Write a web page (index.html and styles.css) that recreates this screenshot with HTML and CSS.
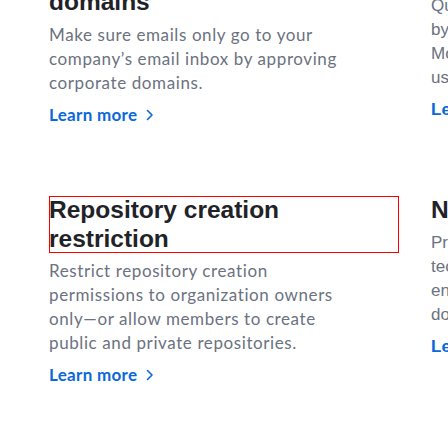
FILE: index.html
```html
<!DOCTYPE html>
<html>
<head>
<meta charset="utf-8">
<link rel="stylesheet" href="styles.css">
</head>
<body>
<div class="page">
  <div class="grid">
    <div class="card">
      <h3 class="title">Restrict email notifications<br>to verified or approved<br>domains</h3>
      <p class="desc">Make sure emails only go to your company’s email inbox by approving corporate domains.</p>
      <a class="more" href="#">Learn more <span class="chev"><svg width="8" height="12" viewBox="0 0 8 12"><path d="M1.5 1.5 L6 6 L1.5 10.5" fill="none" stroke="currentColor" stroke-width="1.6" stroke-linecap="round" stroke-linejoin="round"/></svg></span></a>
    </div>
    <div class="card alt">
      <h3 class="title">Audit log<br>streaming</h3>
      <p class="desc">Quickly review the actions performed<br>by members of your organization.<br>Monitor access, permission changes,<br>user changes, and other events.</p>
      <a class="more" href="#">Learn more <span class="chev"><svg width="8" height="12" viewBox="0 0 8 12"><path d="M1.5 1.5 L6 6 L1.5 10.5" fill="none" stroke="currentColor" stroke-width="1.6" stroke-linecap="round" stroke-linejoin="round"/></svg></span></a>
    </div>
    <div class="card">
      <h3 class="title boxed">Repository creation restriction</h3>
      <p class="desc">Restrict repository creation permissions to organization owners only—or allow members to create public and private repositories.</p>
      <a class="more" href="#">Learn more <span class="chev"><svg width="8" height="12" viewBox="0 0 8 12"><path d="M1.5 1.5 L6 6 L1.5 10.5" fill="none" stroke="currentColor" stroke-width="1.6" stroke-linecap="round" stroke-linejoin="round"/></svg></span></a>
    </div>
    <div class="card alt">
      <h3 class="title">Notification routing</h3>
      <p class="desc">Prevent notifications from leaking to<br>technical or personal accounts by<br>enforcing notification routing to<br>domains you have verified.</p>
      <a class="more" href="#">Learn more <span class="chev"><svg width="8" height="12" viewBox="0 0 8 12"><path d="M1.5 1.5 L6 6 L1.5 10.5" fill="none" stroke="currentColor" stroke-width="1.6" stroke-linecap="round" stroke-linejoin="round"/></svg></span></a>
    </div>
  </div>
</div>
</body>
</html>
```
FILE: styles.css
```css
html, body {
  margin: 0;
  padding: 0;
  background: #ffffff;
  overflow: hidden;
}
.page {
  width: 448px;
  height: 448px;
  overflow: hidden;
}
.grid {
  display: grid;
  grid-template-columns: 350px 350px;
  column-gap: 32px;
  row-gap: 69.5px;
  align-items: start;
  margin-top: -69px;
  margin-left: 49px;
}
.card {
  display: flex;
  flex-direction: column;
  align-items: flex-start;
}
.title {
  margin: 0;
  font-family: "Liberation Sans", Arial, sans-serif;
  font-weight: 700;
  font-size: 24.5px;
  line-height: 28.5px;
  color: #1f2328;
  align-self: stretch;
}
.boxed {
  outline: 1px solid #ff0000;
  outline-offset: -1px;
}
.desc {
  margin: 6px 0 0 0;
  max-width: 292px;
  font-family: Lato, "Open Sans", sans-serif;
  font-size: 17px;
  line-height: 24px;
  letter-spacing: 0.6px;
  color: #6b7280;
}
.more {
  margin-top: 8px;
  font-family: Lato, "Open Sans", sans-serif;
  font-size: 17px;
  line-height: 24px;
  font-weight: 700;
  letter-spacing: 0.3px;
  color: #0969da;
  text-decoration: none;
  display: flex;
  align-items: center;
  gap: 9px;
}
.chev {
  display: inline-flex;
  align-items: center;
}
.alt .desc, .alt .more {
  font-family: "Liberation Sans", Arial, sans-serif;
  letter-spacing: 0;
  max-width: none;
}
```
